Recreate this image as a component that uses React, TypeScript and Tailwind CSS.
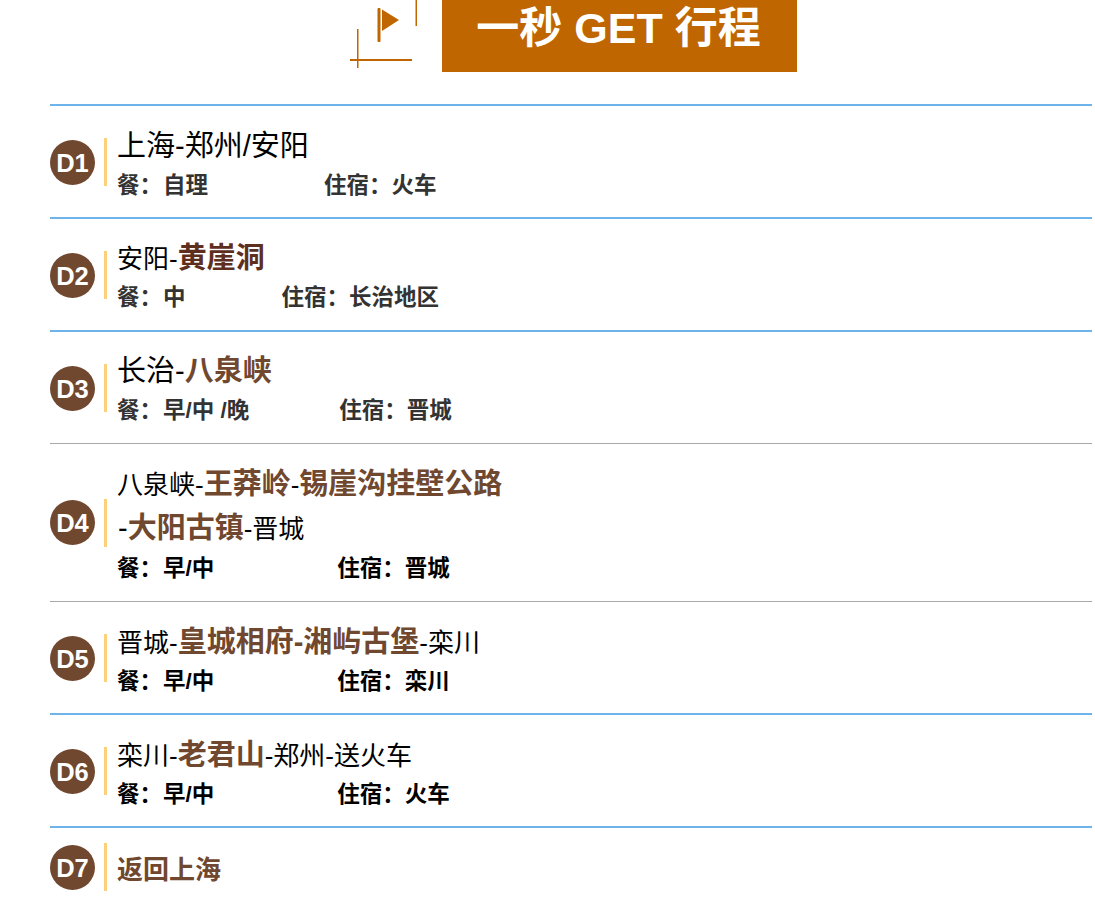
const BROWN = "text-[#704830]";

function Plain({ children }: { children: React.ReactNode }) {
  return <span className="text-[26px] font-normal text-black">{children}</span>;
}

function Strong({ children, dark }: { children: React.ReactNode; dark?: boolean }) {
  return (
    <span className={`text-[29px] font-bold ${dark ? "text-[#5e2f1f]" : BROWN}`}>
      {children}
    </span>
  );
}

function Meta(props: { meal: string; stay: string; gap: string; dark?: boolean; low?: boolean }) {
  const { meal, stay, gap, dark, low } = props;
  return (
    <div
      className={`flex h-[35px] items-center text-[22.5px] font-bold ${dark ? "text-black" : "text-[#333]"} ${low ? "pt-[2px]" : ""}`}
    >
      <span className="w-[46px]">餐：</span>
      <span>{meal}</span>
      <span className={gap}>住宿：</span>
      <span>{stay}</span>
    </div>
  );
}

function Day(props: {
  label: string;
  border: string;
  pad?: string;
  children: React.ReactNode;
}) {
  const { label, border, pad = "pt-[16px] pb-[15px]", children } = props;
  return (
    <div className={`flex items-center ${border} ${pad}`}>
      <div className="flex size-[45px] shrink-0 items-center justify-center rounded-full bg-[#704830] pt-[2px] text-[25.5px] font-bold text-white">
        {label}
      </div>
      <div className="ml-[9px] h-[48px] w-[3px] shrink-0 bg-[#fdd17c]" />
      <div className="ml-[10px] min-w-0 flex-1">{children}</div>
    </div>
  );
}

const BLUE = "border-t-2 border-[#6eb3ea]";
const THIN = "border-t border-[#a9a9a9]";

export default function App() {
  return (
    <div className="ml-[50px] h-[916px] w-[1042px] overflow-hidden bg-white font-['Liberation_Sans','Noto_Sans_CJK_SC',sans-serif]">
      <div className="mb-[32px] flex h-[72px] pl-[300px]">
        <svg width="67" height="72" viewBox="0 0 67 72" className="shrink-0" fill="#bf6600">
          <rect x="65.5" y="0" width="1.5" height="26" />
          <rect x="7" y="29" width="1.5" height="39" />
          <rect x="0" y="59" width="62" height="2" />
          <rect x="27.5" y="8" width="3" height="34" rx="1" />
          <path d="M32 9.5 L49 20 L32 31 Z" />
        </svg>
        <div className="ml-[25px] flex h-[72px] w-[355px] items-center justify-center bg-[#bf6600] pb-[15px] pr-[2px] text-[43px] font-bold text-white">
          一秒 GET 行程
        </div>
      </div>

      <Day label="D1" border={BLUE}>
        <div className="h-[45px] pt-[2px] text-[29px] leading-[45px] text-black">上海-郑州/安阳</div>
        <Meta meal="自理" stay="火车" gap="ml-[116px]" low />
      </Day>
      <Day label="D2" border={BLUE}>
        <div className="h-[45px] pt-[1px] leading-[45px]">
          <Plain>安阳-</Plain>
          <Strong dark>黄崖洞</Strong>
        </div>
        <Meta meal="中" stay="长治地区" gap="ml-[96px]" />
      </Day>
      <Day label="D3" border={BLUE}>
        <div className="h-[45px] pt-[1px] leading-[45px]">
          <span className="text-[29px] text-black">长治-</span>
          <Strong>八泉峡</Strong>
        </div>
        <Meta meal="早/中 /晚" stay="晋城" gap="ml-[90px]" />
      </Day>
      <Day label="D4" border={THIN} pad="pt-[16px] pb-[16px]">
        <div className="h-[45px] pt-[2px] leading-[45px]">
          <Plain>八泉峡-</Plain>
          <Strong>王莽岭</Strong>
          <Plain>-</Plain>
          <Strong>锡崖沟挂壁公路</Strong>
        </div>
        <div className="h-[45px] pl-[1px] pt-[1px] leading-[45px]">
          <span className="text-[29px] text-black">-</span>
          <Strong>大阳古镇</Strong>
          <Plain>-晋城</Plain>
        </div>
        <Meta meal="早/中" stay="晋城" gap="ml-[123px]" dark low />
      </Day>
      <Day label="D5" border={THIN}>
        <div className="h-[45px] pt-[2px] leading-[45px]">
          <Plain>晋城-</Plain>
          <Strong>皇城相府-湘屿古堡</Strong>
          <Plain>-栾川</Plain>
        </div>
        <Meta meal="早/中" stay="栾川" gap="ml-[123px]" dark low />
      </Day>
      <Day label="D6" border={BLUE}>
        <div className="h-[45px] pt-[2px] leading-[45px]">
          <Plain>栾川-</Plain>
          <Strong>老君山</Strong>
          <Plain>-郑州-送火车</Plain>
        </div>
        <Meta meal="早/中" stay="火车" gap="ml-[123px]" dark low />
      </Day>
      <Day label="D7" border={BLUE} pad="pt-[15px] pb-[14px]">
        <div className={`pt-[6px] text-[26px] font-bold ${BROWN}`}>返回上海</div>
      </Day>
    </div>
  );
}
